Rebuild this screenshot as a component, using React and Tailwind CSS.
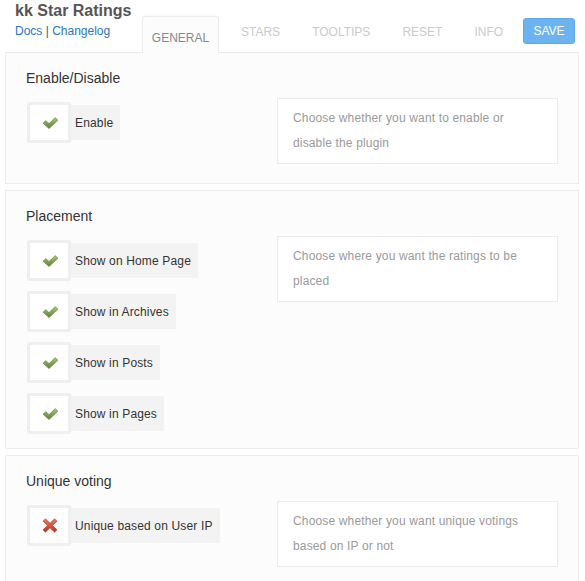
import React from 'react';

const CheckIcon = () => (
  <svg width="17" height="12" viewBox="0 0 17 12">
    <defs>
      <linearGradient id="chk" x1="0" y1="0" x2="0" y2="1">
        <stop offset="0" stopColor="#a8c97a" />
        <stop offset="1" stopColor="#5d7f34" />
      </linearGradient>
    </defs>
    <path d="M1 6.2 L3.8 3.6 L7 6.6 L13.2 0.6 L16 3.3 L7 11.6 Z" fill="url(#chk)" stroke="#62833a" strokeWidth="0.6" strokeLinejoin="round" />
  </svg>
);

const CrossIcon = () => (
  <svg width="16" height="15" viewBox="0 0 16 15">
    <defs>
      <linearGradient id="crs" x1="0" y1="0" x2="0" y2="1">
        <stop offset="0" stopColor="#f07a62" />
        <stop offset="1" stopColor="#b8321f" />
      </linearGradient>
    </defs>
    <path
      d="M1 3.2 L3.4 0.8 L8 5.2 L12.6 0.8 L15 3.2 L10.5 7.5 L15 11.8 L12.6 14.2 L8 9.8 L3.4 14.2 L1 11.8 L5.5 7.5 Z"
      fill="url(#crs)"
      stroke="#b0321f"
      strokeWidth="0.6"
      strokeLinejoin="round"
    />
  </svg>
);

const Checkbox = ({ label, checked = true }) => (
  <div className="flex items-center mb-[10px] ml-[1px]">
    <div className="w-[44px] h-[41px] bg-white border-[3px] border-[#efefef] rounded-[2px] flex items-center justify-center pl-[2px]">
      {checked ? <CheckIcon /> : <CrossIcon />}
    </div>
    <div className="h-[35px] bg-[#f3f3f3] flex items-center pl-[4px] pr-[7px] text-[12px] tracking-[0.15px] text-[#333]">
      {label}
    </div>
  </div>
);

const Panel = ({ title, options, first = false, children }) => (
  <div
    className={
      (first ? 'mt-0 ' : 'mt-[6px] ') +
      'mx-[5px] w-[574px] border border-[#ececec] bg-[#fcfcfd] pt-[17px] pb-[4px] px-[20px]'
    }
  >
    <h2 className="text-[14px] leading-[17px] text-[#333] mb-[11px]">{title}</h2>
    <div className="flex items-start">
      <div className="flex-1 flex flex-col items-start mt-[4px]">
        {options.map((o) => (
          <Checkbox key={o.label} label={o.label} checked={o.checked} />
        ))}
      </div>
      <div className="w-[281px] shrink-0 mb-[15px] bg-white border border-[#ebebeb] px-[15px] py-[7px] text-[12px] leading-[25px] tracking-[0.15px] text-[#9a9a9a]">
        {children}
      </div>
    </div>
  </div>
);

export default function App() {
  return (
    <div className="w-[585px] h-[581px] overflow-hidden bg-white font-['Liberation_Sans',Arial,sans-serif]">
      {/* Header */}
      <div className="flex h-[52px]">
        <div className="w-[142px] shrink-0 pl-[15px]">
          <h1 className="mt-[1px] text-[16px] leading-[19px] font-bold text-[#555]">kk Star Ratings</h1>
          <p className="mt-[4px] text-[12px] leading-[14px] text-[#555]">
            <a className="text-[#2b74c6]">Docs</a> | <a className="text-[#2b74c6]">Changelog</a>
          </p>
        </div>
        <div className="relative z-10 self-end -mb-px w-[77px] h-[37px] bg-[#fcfcfd] border border-b-0 border-[#ececec] rounded-t-[3px] shadow-[0_-1px_2px_rgba(0,0,0,0.03)] pt-[14px] text-center text-[12px] leading-[14px] text-[#888]">
          GENERAL
        </div>
        <div className="flex self-start mt-[25px] ml-[6px] text-[12px] leading-[14px] text-[#cacaca]">
          <span className="px-[16px]">STARS</span>
          <span className="px-[16px]">TOOLTIPS</span>
          <span className="px-[16px]">RESET</span>
          <span className="px-[16px]">INFO</span>
        </div>
        <button className="self-start mt-[18px] ml-auto mr-[10px] w-[52px] h-[26px] rounded-[3px] bg-[#6cb4f0] border border-[#5da9e9] text-white text-[12px]">
          SAVE
        </button>
      </div>

      {/* Panels */}
      <Panel first title="Enable/Disable" options={[{ label: 'Enable', checked: true }]}>
        Choose whether you want to enable or
        <br />
        disable the plugin
      </Panel>

      <Panel
        title="Placement"
        options={[
          { label: 'Show on Home Page', checked: true },
          { label: 'Show in Archives', checked: true },
          { label: 'Show in Posts', checked: true },
          { label: 'Show in Pages', checked: true },
        ]}
      >
        Choose where you want the ratings to be
        <br />
        placed
      </Panel>

      <Panel title="Unique voting" options={[{ label: 'Unique based on User IP', checked: false }]}>
        Choose whether you want unique votings
        <br />
        based on IP or not
      </Panel>
    </div>
  );
}
